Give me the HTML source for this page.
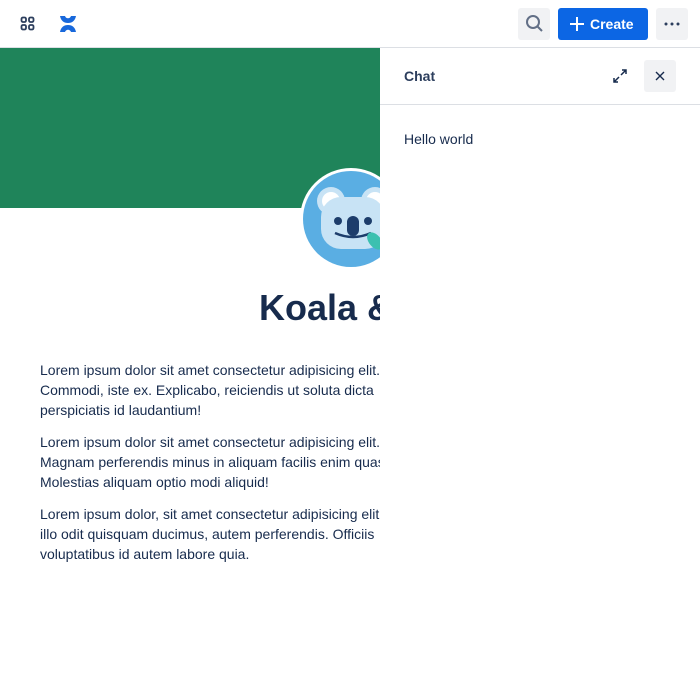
<!DOCTYPE html>
<html><head><style>
*{margin:0;padding:0;box-sizing:border-box}
body{width:700px;height:700px;overflow:hidden;background:#fff;font-family:"Liberation Sans","DejaVu Sans",sans-serif;color:#172b4d;position:relative}
.top{position:absolute;left:0;top:0;width:700px;height:48px;border-bottom:1px solid #dcdfe4;background:#fff}
.green{position:absolute;left:0;top:48px;width:380px;height:160px;background:#1f845a}
.av{position:absolute;left:300px;top:168px;width:102px;height:102px;border-radius:50%;background:#fff;}
.av .in{position:absolute;left:3px;top:3px;width:96px;height:96px;border-radius:50%;background:#5aaee3;overflow:hidden}
h1{position:absolute;left:259px;top:287px;font-size:36px;font-weight:bold;color:#172b4d;white-space:nowrap}
.p{position:absolute;left:40px;width:340px;overflow:hidden;font-size:14px;line-height:20px;color:#172b4d;white-space:nowrap}
.panel{position:absolute;left:380px;top:48px;width:320px;height:652px;background:#fff}
.ph{height:57px;border-bottom:1px solid #dcdfe4;position:relative}
.btn{position:absolute;border-radius:3px;background:#f1f2f4}
</style></head><body>
<div class="top">
<svg style="position:absolute;left:20px;top:16px" width="16" height="16"><g fill="none" stroke="#2c3e5d" stroke-width="1.8"><rect x="1.5" y="1.5" width="4.5" height="4.5" rx="1.5"/><rect x="9" y="1.5" width="4.5" height="4.5" rx="1.5"/><rect x="1.5" y="9" width="4.5" height="4.5" rx="1.5"/><rect x="9" y="9" width="4.5" height="4.5" rx="1.5"/></g></svg>
<svg style="position:absolute;left:58px;top:14px" width="20" height="20" viewBox="0 0 20 20"><path d="M2 2 L7 2 C8 5 12 5 13 2 L18 2 C17 7 14 9 10 9 C6 9 3 7 2 2Z M2 18 L7 18 C8 15 12 15 13 18 L18 18 C17 13 14 11 10 11 C6 11 3 13 2 18Z" fill="#1868db"/></svg>
<div class="btn" style="left:518px;top:8px;width:32px;height:32px"><svg style="position:absolute;left:7px;top:6px" width="20" height="20"><circle cx="8" cy="8" r="6" fill="none" stroke="#626f86" stroke-width="2"/><path d="M12.5 12.5 L17 17" stroke="#626f86" stroke-width="2"/></svg></div>
<div style="position:absolute;left:558px;top:8px;width:90px;height:32px;background:#0c66e4;border-radius:3px;color:#fff;font-size:14px;font-weight:bold;line-height:32px;padding-left:32px">Create<svg style="position:absolute;left:12px;top:9px" width="14" height="14"><path d="M7 0V14M0 7H14" stroke="#fff" stroke-width="2"/></svg></div>
<div class="btn" style="left:656px;top:8px;width:32px;height:32px"><svg style="position:absolute;left:8px;top:14px" width="16" height="4"><circle cx="2" cy="2" r="1.5" fill="#2c3e5d"/><circle cx="8" cy="2" r="1.5" fill="#2c3e5d"/><circle cx="14" cy="2" r="1.5" fill="#2c3e5d"/></svg></div>
</div>
<div class="green"></div>
<div class="av"><div class="in">
<svg width="96" height="96" viewBox="0 0 96 96"><circle cx="28" cy="30" r="14" fill="#c8e3f5"/><circle cx="72" cy="30" r="14" fill="#c8e3f5"/><circle cx="28" cy="30" r="9" fill="#fff"/><circle cx="72" cy="30" r="9" fill="#fff"/><rect x="18" y="26" width="64" height="52" rx="20" fill="#c8e3f5"/><circle cx="35" cy="50" r="4" fill="#1d3d6b"/><circle cx="65" cy="50" r="4" fill="#1d3d6b"/><rect x="44" y="45" width="12" height="20" rx="6" fill="#1d3d6b"/><path d="M32 62 Q50 70 68 62" stroke="#1d3d6b" stroke-width="2.5" fill="none"/><ellipse cx="72" cy="70" rx="6" ry="10" transform="rotate(-40 72 70)" fill="#3cc0b0"/></svg>
</div></div>
<h1>Koala &amp;</h1>
<div class="p" style="top:360px">Lorem ipsum dolor sit amet consectetur adipisicing elit.<br>Commodi, iste ex. Explicabo, reiciendis ut soluta dicta<br>perspiciatis id laudantium!</div>
<div class="p" style="top:432px">Lorem ipsum dolor sit amet consectetur adipisicing elit.<br>Magnam perferendis minus in aliquam facilis enim quas.<br>Molestias aliquam optio modi aliquid!</div>
<div class="p" style="top:504px">Lorem ipsum dolor, sit amet consectetur adipisicing elit.<br>illo odit quisquam ducimus, autem perferendis. Officiis<br>voluptatibus id autem labore quia.</div>
<div class="panel">
<div class="ph">
<div style="position:absolute;left:24px;top:20px;font-size:14px;font-weight:bold;color:#2c3e5d">Chat</div>
<svg style="position:absolute;left:232px;top:20px" width="16" height="16"><path d="M9 7L14 2M10 2H14V6M7 9L2 14M2 10V14H6" stroke="#172b4d" stroke-width="1.5" fill="none"/></svg>
<div class="btn" style="left:264px;top:12px;width:32px;height:32px"><svg style="position:absolute;left:11px;top:11px" width="10" height="10"><path d="M1 1L9 9M9 1L1 9" stroke="#172b4d" stroke-width="1.4"/></svg></div>
</div>
<div style="position:absolute;left:24px;top:83px;font-size:14px;color:#172b4d">Hello world</div>
</div>
</body></html>
